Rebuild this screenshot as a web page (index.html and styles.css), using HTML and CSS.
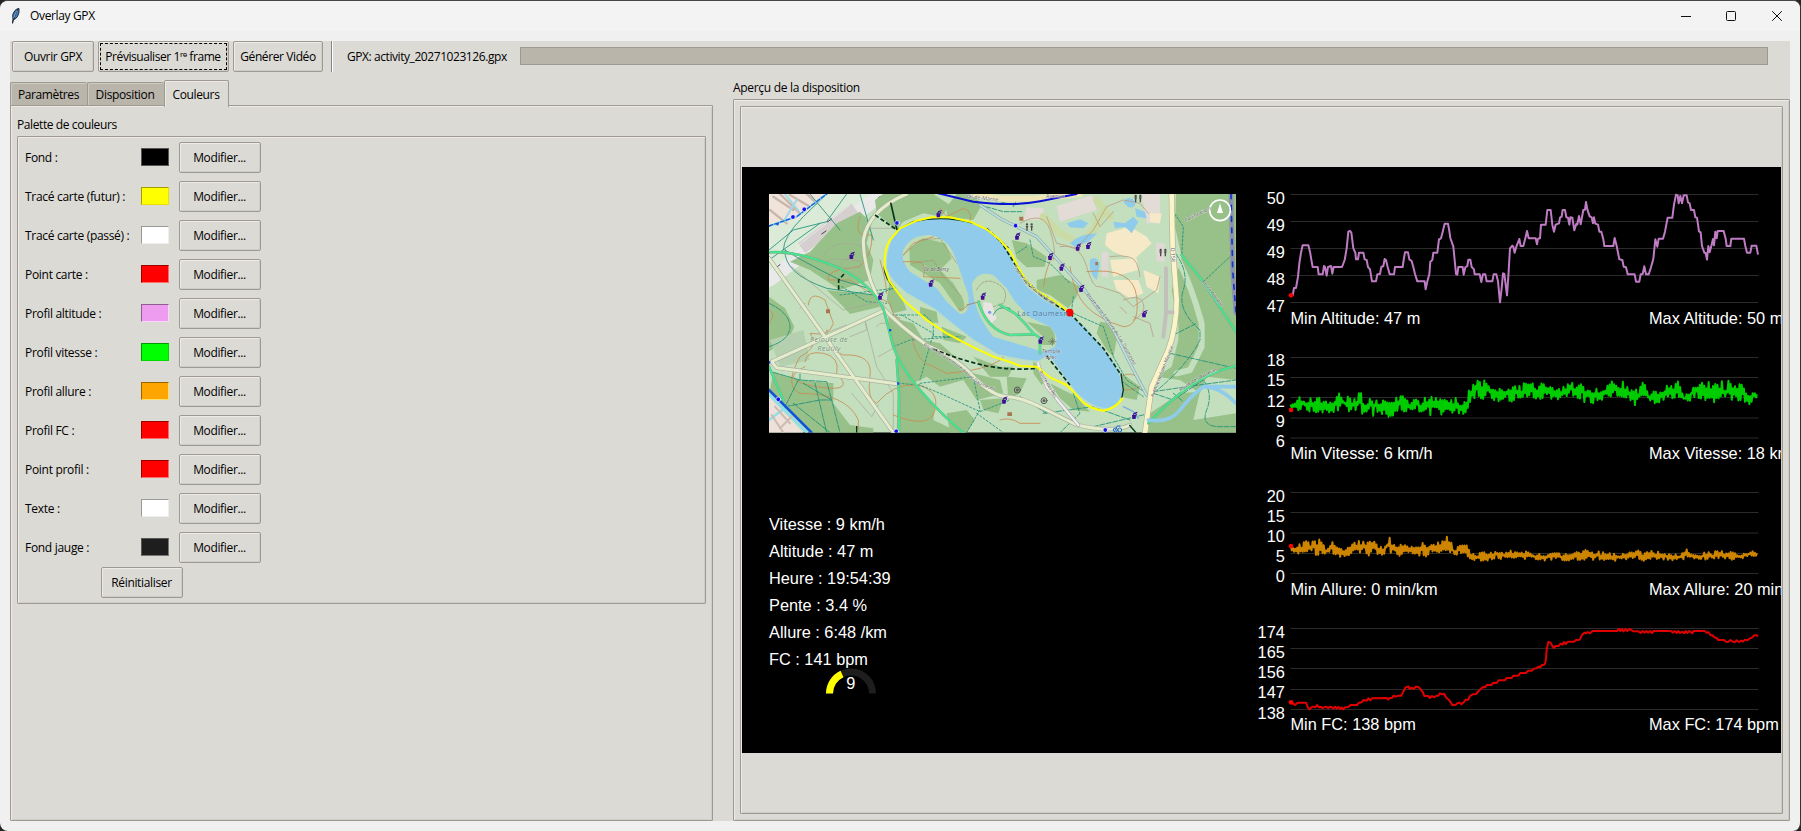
FILE: index.html
```html
<!DOCTYPE html>
<html lang="fr">
<head>
<meta charset="utf-8">
<title>Overlay GPX</title>
<link rel="stylesheet" href="styles.css">
</head>
<body>
<div class="window">
  <header class="titlebar">
    <svg class="feather" viewBox="0 0 12 18"><path d="M2.5 16.500L3 12Q1.500 7 5 3.500Q7 1.500 9 1.500Q9.500 6 7.500 9.500Q6 12 3.500 12.500" fill="#3d7cc4" stroke="#1c2632" stroke-width="1"/><path d="M7.500 3.500L4 11" stroke="#a9d3f5" stroke-width="1.200"/><path d="M8 2L2.500 16" stroke="#10151c" stroke-width=".7"/></svg>
    <span class="title">Overlay GPX</span>
    <svg class="controls" viewBox="0 0 102 12" fill="none" stroke="#111"><path d="M0 6.500H10"/><rect x="45.500" y="1.500" width="9" height="9" rx="1"/><path d="M91.200 1.200L100.800 10.800M100.800 1.200L91.200 10.800"/></svg>
  </header>
  <main class="app">
    <div class="toolbar">
      <button class="btn b-open">Ouvrir GPX</button>
      <button class="btn b-prev focus">Prévisualiser 1ʳᵉ frame</button>
      <button class="btn b-gen">Générer Vidéo</button>
      <i class="sep"></i>
      <span class="file">GPX: activity_20271023126.gpx</span>
      <div class="progress"></div>
    </div>
    <div class="panes">
      <section class="left">
        <nav class="tabs"><span class="tab t1">Paramètres</span><span class="tab t2">Disposition</span><span class="tab t3 active">Couleurs</span></nav>
        <div class="pane frame">
          <div class="caption">Palette de couleurs</div>
          <div class="palette frame">
            <div class="row"><span>Fond :</span><i class="sw black"></i><button class="btn">Modifier...</button></div>
            <div class="row"><span>Tracé carte (futur) :</span><i class="sw yellow"></i><button class="btn">Modifier...</button></div>
            <div class="row"><span>Tracé carte (passé) :</span><i class="sw white"></i><button class="btn">Modifier...</button></div>
            <div class="row"><span>Point carte :</span><i class="sw red"></i><button class="btn">Modifier...</button></div>
            <div class="row"><span>Profil altitude :</span><i class="sw violet"></i><button class="btn">Modifier...</button></div>
            <div class="row"><span>Profil vitesse :</span><i class="sw green"></i><button class="btn">Modifier...</button></div>
            <div class="row"><span>Profil allure :</span><i class="sw orange"></i><button class="btn">Modifier...</button></div>
            <div class="row"><span>Profil FC :</span><i class="sw red"></i><button class="btn">Modifier...</button></div>
            <div class="row"><span>Point profil :</span><i class="sw red"></i><button class="btn">Modifier...</button></div>
            <div class="row"><span>Texte :</span><i class="sw white"></i><button class="btn">Modifier...</button></div>
            <div class="row"><span>Fond jauge :</span><i class="sw dark"></i><button class="btn">Modifier...</button></div>
            <button class="btn reset">Réinitialiser</button>
          </div>
        </div>
      </section>
      <section class="right">
        <div class="caption2">Aperçu de la disposition</div>
        <div class="outer frame"><div class="inner frame">
<svg class="preview" viewBox="742 167 1039 586">
<defs>
  <clipPath id="mapclip"><rect x="27" y="42" width="1401" height="716"/></clipPath>
  <g id="tap"><path d="M-6-3H6L5 9H-5Z" fill="#3c0f96"/><path d="M-1-2V-7H7V-3M0-8L9-11" fill="none" stroke="#3c0f96" stroke-width="3"/></g>
  <g id="wc" fill="#4b4b4b"><circle cx="-7" cy="-8" r="3.500"/><circle cx="7" cy="-8" r="3.500"/><path d="M-11-4H-3L-5 3V11H-9V3ZM3-4H11L9 3V11H5V3Z"/></g>
</defs>
<rect x="742" y="167" width="1039" height="586" fill="#000"/>
<g transform="translate(760 180) scale(.33333)"><g clip-path="url(#mapclip)" fill="none" stroke-linecap="round" stroke-linejoin="round">
  <rect x="27" y="42" width="1401" height="716" fill="#c4dfbe"/>
  <!-- streets and buildings, north-west -->
  <path d="M27 42H340L330 70L100 255L27 305Z" fill="#dcebd8"/>
  <path d="M27 42H200L120 115L27 140Z" fill="#efe3da"/>
  <path d="M40 50L100 90M30 90L80 130M90 45L150 80M60 42L120 100M140 42L170 70" stroke="#c9b6ad" stroke-width="7"/>
  <path d="M75 42L115 92M110 60L70 125" stroke="#9fd9e6" stroke-width="6"/>
  <path d="M27 300L340 62L400 42" stroke="#e9e9e9" stroke-width="42"/>
  <path d="M125 205L285 85" stroke="#d5cfcf" stroke-width="38" stroke-linecap="butt"/>
  <path d="M110 200L270 75M125 230L295 100" stroke="#f4f4f4" stroke-width="2"/>
  <path d="M45 265L60 254M185 162L198 153M202 126L215 117M355 53L367 47" stroke="#444" stroke-width="3"/>
  <!-- woods -->
  <g fill="#98c189">
    <path d="M150 215L230 130L300 95L335 130L320 190L340 240L330 300L240 330L150 270L90 245Z"/>
    <path d="M370 42H520L570 75L545 110L490 100L430 125L410 150L350 100L345 60Z"/>
    <path d="M590 42H640L665 75L640 120L560 110L560 80Z"/>
    <path d="M200 330L345 345L360 380L270 402L240 370Z"/>
    <path d="M27 350L75 385L103 440L90 470L27 515Z"/>
    <path d="M40 577L120 600L220 610V670L270 735L340 745V758H150L30 630Z"/>
    <path d="M390 300L420 340L440 390L400 400L380 360Z"/>
    <path d="M480 380L530 395L535 430L510 425L480 405Z"/>
    <path d="M385 410L460 430L490 480L540 490L640 580L720 600L730 640L650 660L610 600L540 620L500 590L460 610L500 650L525 680L520 720L600 758H410L415 600L405 510L385 455Z"/>
    <path d="M545 440L620 470L600 490L550 480ZM640 530L720 560L760 560L745 590L690 590ZM560 700L620 690L645 720L620 758H570ZM660 660L730 655L715 700L670 690Z"/>
    <path d="M755 180L800 190L860 230L855 260L800 262L770 235ZM830 300L900 285L960 320L950 350L925 385L870 345L830 330Z"/>
    <path d="M1020 425L1050 430L1070 480L1060 530L1040 510L1010 460ZM1070 580L1100 590L1140 620L1130 660L1080 650ZM870 610L950 650L990 695L940 690L900 655ZM740 590L800 595L780 640L745 660ZM820 540L860 600L845 615L820 580Z"/>
    <path d="M1248 42H1428V600L1340 590L1320 640L1260 600L1190 590L1235 560L1255 480V430L1235 330L1265 230L1245 140Z"/>
    <path d="M1170 700L1260 640L1320 635L1300 720L1428 700V758H1165Z"/>
  </g>
  <path d="M1255 240Q1295 320 1325 430L1325 500L1290 570L1250 580" stroke="#c4dfbe" stroke-width="18"/>
  <path d="M30 480L130 450L150 540L60 560Z" fill="#b5d0ae"/>
  <!-- zoo grounds -->
  <path d="M800 82L850 85L855 120L790 120ZM890 78L995 45L1010 90L900 125ZM1145 42H1200V130H1160Z" fill="#e2dbd6"/>
  <path d="M850 110L900 160L960 190L1000 150L1030 90M1010 60L1050 110" stroke="#cbdba5" stroke-width="22"/>
  <path d="M1040 160L1110 140L1160 170L1175 190L1120 240L1060 215L1035 195ZM1050 240L1130 235L1135 270L1060 290ZM1060 300L1135 300L1150 340L1110 355L1070 330ZM1150 270L1200 290L1195 340L1160 320ZM1170 100L1205 100L1200 130L1170 125Z" fill="#f5e9c8"/>
  <path d="M1025 215H1045V290H1025ZM1187 190H1215V245H1190Z" fill="#e0d8d4"/>
  <g fill="#8fcbea"><path d="M920 130L960 118L985 130L970 145L930 142ZM930 190Q960 160 1012 160L985 185L945 200ZM1060 125L1095 130L1120 110L1135 125L1115 160L1095 140L1065 145ZM1090 65Q1105 45 1125 62Q1130 85 1105 82ZM1125 85L1155 95L1160 115L1130 110ZM990 240Q1005 225 1020 250L1010 300Q985 280 990 240Z"/></g>
  <path d="M780 130Q850 90 870 150T880 240M860 110L890 190L950 205L1000 150L1040 80L1090 60L1140 70L1165 100M900 200Q960 190 980 260T1020 320L1080 340L1120 380L1190 330L1200 290M1050 230Q1120 220 1130 250T1140 290M1090 360Q1140 340 1150 370T1120 420M1120 410L1170 430L1180 470M1080 380L1100 400M1000 100L1020 140L1060 95" stroke="#b99f82" stroke-width="2.500"/>
  <!-- contour lines -->
  <g stroke="#c98b53" stroke-width="2.500"><path d="M300 110Q285 150 305 165L335 165Q340 220 300 260L235 270Q200 280 205 300L270 300L340 345L390 370Q400 420 420 415"/><path d="M145 375Q150 330 195 360L220 430Q210 470 150 460Q180 500 120 530Q70 620 120 640Q260 640 295 720V750"/><path d="M135 545Q140 510 190 520T230 580Q290 640 170 620T135 560M200 450Q200 510 250 525Q340 520 330 590T350 670Q400 610 470 615Q540 630 525 690T400 705"/><path d="M455 470Q470 550 520 560L560 580Q680 570 720 540T755 480M360 240Q380 310 380 340"/><path d="M540 85L560 110L610 85Q650 100 620 140M850 320Q860 250 880 230M930 260Q940 340 980 380T1090 440Q1140 440 1130 350Q1120 260 980 275"/><path d="M720 310L770 370M720 380L790 450Q840 460 870 490M720 720Q750 710 780 730H840M1080 590Q1120 570 1140 600T1080 630M27 390Q50 400 27 430"/></g>
  <!-- footpaths -->
  <g stroke="#1b8f78" stroke-width="2.500"><path d="M27 210L100 150L200 125L260 42M70 210Q70 170 130 110L200 42M75 210Q120 240 240 300L325 325M27 240L180 130M150 42L240 150M75 210Q70 280 200 325L340 345M300 42L340 180M385 70L330 115"/><path d="M27 370Q90 400 90 440T27 500M40 577L120 600L200 605L215 660L130 610M120 600V580M115 600L75 680L180 660L215 660L240 758M165 610L200 758M100 670L210 758" stroke-dasharray="18 4"/><path d="M245 320L320 365L380 370M240 345L400 325L345 345M395 405H495L520 430V470H580M400 500L450 480L600 470M425 405L520 460L480 600M415 610L480 615L540 640L660 695L750 660M480 610L640 590L660 690L620 758M650 700L730 758" stroke-dasharray="6 6"/><path d="M940 400L1030 440L1060 530L1100 600L1160 640M810 180L820 230L870 250L930 310M940 350L935 390M800 200L770 220M1245 110L1240 95L1270 140L1265 230M1330 305L1410 230" stroke-dasharray="7 5"/><path d="M1235 205Q1290 270 1270 330T1320 450V480Q1280 560 1180 640M1230 520L1428 565M1240 465L1310 430M1180 635L1280 620L1428 600M1180 640L1240 660L1330 600Q1360 640 1340 690T1380 740H1428M1240 640L1270 665M1000 740L1170 700M850 700L1000 680L1110 720M940 640L960 700L900 758M780 650L860 700M1080 600L1150 650" stroke-dasharray="15 5"/><path d="M720 65L760 75L830 60M770 60L760 80M660 75L730 95H790" stroke-dasharray="14 5"/></g>
  <!-- pale tracks -->
  <g stroke="#a9a59a" stroke-width="2"><path d="M120 385L135 370M195 460L260 435M95 260L250 390L360 365M270 470L320 450L315 420L350 560L400 640V758M355 530L400 505M275 640L335 710L355 675M350 440L360 430H385M325 145H400M190 230Q210 190 260 190T320 220T270 240T190 250M245 250Q260 225 290 240T280 262T245 250M400 400L470 470L455 500"/></g>
  <!-- roads -->
  <g stroke="#aaada5" stroke-width="13"><path d="M27 235L400 758M35 545L365 395M35 545L50 563L415 612M440 42Q325 90 310 180Q310 280 370 385Q420 440 500 495Q600 540 640 590Q700 650 740 650T860 690T950 735Q1060 760 1110 735"/></g>
  <g stroke="#e4edc9" stroke-width="9"><path d="M27 235L400 758M35 545L365 395M35 545L50 563L415 612M440 42Q325 90 310 180Q310 280 370 385Q420 440 500 495Q600 540 640 590Q700 650 740 650T860 690T950 735Q1060 760 1110 735"/></g>
  <path d="M1235 42L1238 200L1250 360Q1250 440 1225 510L1175 620L1155 758" stroke="#b6b19a" stroke-width="18"/><path d="M1235 42L1238 200L1250 360Q1250 440 1225 510L1175 620L1155 758" stroke="#f9f5c8" stroke-width="14"/>
  <path d="M1218 265V400L1210 470M1218 397H1238" stroke="#c3bfbb" stroke-width="12"/>
  <path d="M835 520V555L860 620L955 735" stroke="#aaa" stroke-width="11"/><path d="M835 520V555L860 620L955 735" stroke="#eee" stroke-width="7"/>
  <!-- lake and islands -->
  <path d="M379 265Q374 160 450 127Q560 95 680 145Q735 185 765 260L800 318L850 357L925 400L975 440L1050 530Q1090 580 1088 640Q1080 675 1045 686Q1000 690 950 640L905 580L865 525L835 545L790 540L715 525L640 480L575 430L520 385L440 340Q390 300 379 265Z" fill="#90cbeb" stroke="#b9dcc8" stroke-width="4"/>
  <path d="M430 210Q450 165 510 165Q565 175 585 230L625 345Q630 405 600 402L560 365L530 325L450 275Q420 240 430 210Z" fill="#bfdcb5"/>
  <path d="M448 205L490 175L555 190L575 235L540 270L580 310L610 360Q620 390 600 395L540 310L450 255Z" fill="#98c189"/>
  <path d="M636 310Q655 270 700 285L740 325L765 365L810 412L870 440Q900 470 885 500L850 515L800 500L700 470Q640 400 636 310Z" fill="#c0ddb8"/>
  <path d="M800 425L870 440Q895 470 880 495L845 495L850 470Z" fill="#98c189"/>
  <path d="M430 225L460 190L520 170M430 245H480Q500 260 490 290L600 295M595 385Q600 400 625 375" stroke="#c98b53" stroke-width="2.500"/>
  <path d="M620 375L660 365" stroke="#a38f6f" stroke-width="3"/>
  <path d="M670 365L695 370L710 415L695 430L670 395Z" fill="#e8e4e2"/><path d="M430 225L480 180L540 175L590 250M460 250L520 240L550 290L605 350M650 330Q670 290 710 310T730 370L700 380" stroke="#a38f6f" stroke-width="2" stroke-dasharray="8 4"/>
  <path d="M655 365Q680 450 750 465L825 463L840 475V520M720 375L765 400L790 425L820 460" stroke="#7fa08a" stroke-width="8"/><path d="M700 405Q710 375 750 385" stroke="#1b8f78" stroke-width="2.500"/><path d="M655 365Q680 450 750 465L825 463L840 475V520M720 375L765 400L790 425L820 460" stroke="#4de892" stroke-width="6"/>
  <!-- cycle routes -->
  <g stroke="#8a9b8c" stroke-width="8"><path d="M27 217Q110 210 240 265Q330 310 370 385L400 500Q420 560 480 630T610 758M410 540L417 640V750M27 560L70 660"/><path d="M1265 225L1330 305L1428 455M1165 730Q1220 670 1280 625T1428 557"/></g>
  <g stroke="#45e58d" stroke-width="6"><path d="M27 217Q110 210 240 265Q330 310 370 385L400 500Q420 560 480 630T610 758M410 540L417 640V750M27 560L70 660"/><path d="M1265 225L1330 305L1428 455M1165 730Q1220 670 1280 625T1428 557"/></g>
  <path d="M660 75L720 115L830 170L970 325L1060 450L1120 570L1160 645" stroke="#8a9a94" stroke-width="9"/><path d="M660 75L720 115L830 170L970 325L1060 450L1120 570L1160 645" stroke="#b7dfe0" stroke-width="6"/>
  <path d="M1165 720Q1230 730 1260 690T1330 620Q1380 620 1428 670M1330 620H1428" stroke="#8fcbea" stroke-width="11"/>
  <!-- boulevards -->
  <path d="M640 42L720 56H820L960 42" stroke="#eee5b7" stroke-width="18"/><path d="M535 40L640 65Q760 80 840 64L950 42" stroke="#0b12d5" stroke-width="6"/>
  <path d="M27 650L130 758H27Z" fill="#eee1d9"/><path d="M27 643L140 758M27 720L80 680" stroke="#8be0ec" stroke-width="7"/><path d="M27 630L155 758" stroke="#0f55dc" stroke-width="8"/><path d="M45 680L90 730M60 745L95 710M35 705L70 758" stroke="#cdbab1" stroke-width="6"/>
  <path d="M27 138L110 110L200 42" stroke="#8be0ec" stroke-width="7"/><path d="M27 138L110 110L200 42" stroke="#195bd7" stroke-width="4" stroke-dasharray="12 6"/>
  <path d="M1413 42L1418 270L1428 400" stroke="#8d93ab" stroke-width="14"/><path d="M1413 42L1418 270L1428 400" stroke="#1533c8" stroke-width="5" stroke-dasharray="14 20"/>
  <path d="M1090 680L1120 695L1135 715" stroke="#7aaedf" stroke-width="4"/>
  <!-- dark trails -->
  <g stroke="#06331d" stroke-linecap="butt"><path d="M392 68L411 150" stroke-width="5"/><path d="M345 105L408 148M252 282L236 300V330M520 507Q600 540 680 558Q760 572 830 565M930 400L1030 505L1080 580M860 528L930 615M720 180L800 310L850 352L925 398M680 145L745 205" stroke-width="5" stroke-dasharray="13 7"/><path d="M411 150L460 125Q550 105 640 130M372 260Q375 300 405 325M1083 580L1090 630L1085 655M1108 735L1128 758M290 738V758" stroke-width="4"/></g>
  <!-- recorded track -->
  <path d="M929 398L893 370L860 350L825 328L800 304L775 263L752 217L720 180L712 173L680 148L630 125L570 112H515L470 122L420 145L390 180Q372 210 374 262L388 303L430 360L500 420L560 460L640 502L700 530L750 546L780 558L830 560L870 592L920 615L940 635L970 668Q1000 690 1032 692Q1068 684 1087 655" stroke="#ffff00" stroke-width="6"/>
  <!-- markers -->
  <g><use href="#tap" x="274" y="228"/><use href="#tap" x="512" y="311"/><use href="#tap" x="360" y="350"/><use href="#tap" x="668" y="350"/><use href="#tap" x="535" y="103"/><use href="#tap" x="732" y="662"/><use href="#tap" x="771" y="170"/><use href="#tap" x="870" y="231"/><use href="#tap" x="904" y="263"/><use href="#tap" x="953" y="203"/><use href="#tap" x="984" y="198"/><use href="#tap" x="963" y="327"/><use href="#tap" x="1152" y="403"/><use href="#tap" x="841" y="482"/><use href="#tap" x="1122" y="708"/></g>
  <use href="#wc" x="1134" y="56"/><use href="#wc" x="808" y="141"/><use href="#wc" x="1209" y="218"/>
  <g fill="#1212e8" stroke="#fff" stroke-width="2"><circle cx="99" cy="111" r="7"/><circle cx="133" cy="88" r="7"/><circle cx="411" cy="129" r="7"/><circle cx="55" cy="658" r="7"/><circle cx="409" cy="754" r="7"/><circle cx="767" cy="137" r="7"/><circle cx="1036" cy="750" r="7"/></g>
  <g fill="#1d4ddc"><path d="M387 447H394V454H387ZM411 607H418V614H411ZM49 129H56V136H49ZM27 543H31V551H27Z"/></g><circle cx="689" cy="397" r="5" fill="#7e9de4"/>
  <g stroke="#555" stroke-width="3"><circle cx="772" cy="630" r="9"/><circle cx="852" cy="662" r="9"/></g><g fill="#666"><circle cx="772" cy="630" r="5"/><circle cx="852" cy="662" r="5"/></g>
  <path d="M866 485H888M877 474V496M870 478L884 492M884 478L870 492" stroke="#666" stroke-width="2"/>
  <path d="M1060 750a6 6 0 1 0 12 0a6 6 0 1 0-12 0M1073 750a6 6 0 1 0 12 0a6 6 0 1 0-12 0M1066 750L1072 738H1080" stroke="#1b68d2" stroke-width="3"/>
  <path d="M198 388H210V400H198ZM742 697H756V708H742ZM1006 246H1014V256H1006ZM778 110H790V122H778Z" fill="#a87750"/>
  <circle cx="929" cy="398" r="11.500" fill="#f00"/>
  <circle cx="1380" cy="91" r="31" stroke="#fff" stroke-width="5"/><path d="M1380 70L1389 99H1371Z" fill="#fff"/>
  <!-- place names -->
  <defs><path id="r1" d="M490 497Q580 545 620 585T735 640"/><path id="r2" d="M978 345Q1070 450 1130 575"/><path id="r3" d="M760 258Q800 330 895 382"/><path id="r4" d="M1180 652L1252 470"/><path id="r5" d="M1325 305L1390 390"/><path id="r6" d="M1262 635Q1320 590 1385 568"/><path id="r7" d="M836 575L890 665"/><path id="r8" d="M1278 125L1370 80"/></defs>
  <g class="mapnames"><text x="150" y="486" class="park">Pelouse de</text><text x="172" y="514" class="park">Reuilly</text><text x="491" y="273" class="isle">Île de Bercy</text><text x="772" y="407" class="water">Lac Daumesn</text><text x="846" y="519" class="small">Temple</text><text x="856" y="537" class="small">Grec</text><text transform="translate(1232 203) rotate(87)" class="small">D 158</text><text x="615" y="53" class="small" transform="rotate(7 615 53)">Val-de-Marne</text><text x="858" y="53" class="small">Avenue</text>
  <text class="road"><textPath href="#r1">Route de la Ceinture du Lac Daumesnil</textPath></text><text class="road"><textPath href="#r2">Route de la Ceinture du Lac Daumesnil</textPath></text><text class="road"><textPath href="#r3">Promenade Maurice Boitel</textPath></text><text class="road"><textPath href="#r4">Avenue de Saint-Maurice</textPath></text><text class="road"><textPath href="#r5">Route Aimable</textPath></text><text class="road"><textPath href="#r6">Route des Batteries</textPath></text><text class="road"><textPath href="#r7">Route des Îles</textPath></text><text class="road"><textPath href="#r8">Fortifications</textPath></text></g>
</g></g>

<!-- gauge -->
<path d="M829.500 693.500A21.500 21.500 0 0 1 872.500 693.500" fill="none" stroke="#1e1e1e" stroke-width="7"/>
<path d="M829.500 693.500A21.500 21.500 0 0 1 842 674" fill="none" stroke="#ff0" stroke-width="7"/>
<g class="osd"><text x="769" y="529.600">Vitesse : 9 km/h</text><text x="769" y="556.700">Altitude : 47 m</text><text x="769" y="583.700">Heure : 19:54:39</text><text x="769" y="610.700">Pente : 3.4 %</text><text x="769" y="637.700">Allure : 6:48 /km</text><text x="769" y="664.700">FC : 141 bpm</text><text x="846.300" y="688.700">9</text></g>

<path class="grid" d="M1290.500 194.500H1758.500M1290.500 221.500H1758.500M1290.500 248.500H1758.500M1290.500 275.500H1758.500M1290.500 302.500H1758.500M1290.500 357.500H1758.500M1290.500 377.500H1758.500M1290.500 397.500H1758.500M1290.500 418H1758.500M1290.500 438H1758.500M1290.500 492.500H1758.500M1290.500 512.500H1758.500M1290.500 533H1758.500M1290.500 553.500H1758.500M1290.500 573.500H1758.500M1290.500 628.500H1758.500M1290.500 648.500H1758.500M1290.500 668.500H1758.500M1290.500 689.500H1758.500M1290.500 709.500H1758.500"/>
<g class="osd scale"><text x="1284.800" y="203.500">50</text><text x="1284.800" y="230.500">49</text><text x="1284.800" y="257.500">49</text><text x="1284.800" y="284.500">48</text><text x="1284.800" y="311.500">47</text><text x="1284.800" y="366.300">18</text><text x="1284.800" y="386.400">15</text><text x="1284.800" y="406.500">12</text><text x="1284.800" y="426.800">9</text><text x="1284.800" y="446.700">6</text><text x="1284.800" y="501.700">20</text><text x="1284.800" y="522">15</text><text x="1284.800" y="542">10</text><text x="1284.800" y="562.300">5</text><text x="1284.800" y="582.400">0</text><text x="1284.800" y="637.500">174</text><text x="1284.800" y="657.700">165</text><text x="1284.800" y="677.900">156</text><text x="1284.800" y="698.200">147</text><text x="1284.800" y="718.500">138</text></g>
<g class="osd"><text x="1290.500" y="323.600">Min Altitude: 47 m</text><text x="1649" y="323.600">Max Altitude: 50 m</text><text x="1290.500" y="459">Min Vitesse: 6 km/h</text><text x="1649" y="459">Max Vitesse: 18 km/h</text><text x="1290.500" y="594.700">Min Allure: 0 min/km</text><text x="1649" y="594.700">Max Allure: 20 min/km</text><text x="1290.500" y="730">Min FC: 138 bpm</text><text x="1649" y="730">Max FC: 174 bpm</text></g>
<g transform="translate(1240 180) scale(.33333)" fill="none" stroke-linejoin="round" stroke-width="6">
  <path stroke="#bf7cc4" d="M152 346H158L162 324H168L174 290L178 250L183 218L188 196H205L210 215L215 245L218 261H233L236 283H248L252 258L255 261L260 287L264 261L273 258L277 281L281 261H306L314 240L320 205L325 155L330 153L334 158L340 205L346 218L348 238H354L357 218H370L374 238L380 240L384 261L390 268L396 304H408L412 283L420 282L424 261L430 258L434 237L438 240L443 261L449 283H462L465 261H488L491 240L495 217H504L508 238L515 243L520 261L525 282L532 304H554L557 328L562 304L568 283L571 245L577 240L580 218H592L597 178L603 175L608 156L614 131H624L628 153L631 174L640 200L644 240L648 282L652 284L655 261H668L671 284L676 262L682 258L685 239H691L695 261L702 268L704 283H719L724 306L729 283H736L740 304H757L761 283H769L774 304L780 367L785 325L789 280L793 282L801 346L805 290L810 205L817 197L820 200L824 218L829 200L838 177L842 198H850L856 175L861 153L866 175H887L891 193L894 176L900 175L903 134H917L922 90H932L937 134L942 155L947 134L957 130L960 113L965 110L968 90H975L979 112L984 113L988 134L991 112L997 113L1003 151L1009 131L1012 133L1017 108L1022 133L1030 90L1035 89L1038 66L1042 88L1049 109L1055 112L1059 130L1062 112L1066 131L1074 134L1078 155L1084 155L1090 178L1093 198H1120L1124 174L1130 198L1138 238L1147 240L1151 260L1158 262L1163 283H1184L1188 305H1198L1202 283L1208 282L1213 259L1218 283H1226L1233 262L1240 237L1246 178L1252 200L1256 176H1269L1275 155L1283 113H1297L1302 74L1308 44L1313 46L1316 70L1321 48L1326 70L1331 46L1340 46L1344 67L1349 70L1353 90H1362L1366 112L1371 113L1377 154L1382 157L1386 198L1393 218L1397 219L1401 239L1405 198L1409 217L1414 198L1419 177L1422 196L1426 155L1430 175L1433 153H1451L1457 176L1460 198H1471L1474 176H1512L1516 198L1521 218H1531L1535 197H1549L1554 224"/>
  <path id="speed" stroke="#00cd00"/>
  <path id="pace" stroke="#cd8500" transform="translate(0 780)"/>
  <path stroke="#e10000" transform="translate(0 780)" d="M152 788L158 790L165 795L173 788H198L204 803L209 808L214 802L220 800L226 802L231 795L237 802L244 801L248 805L254 801L259 800L265 805L269 800L275 801L280 806L285 800L290 806L295 801L301 807L305 802L310 808L315 802L325 801L332 795H351L357 788L365 787L370 780L380 782L385 775L391 781L396 775L440 774L445 779L449 774H456L461 767L467 770L475 767H484L490 755L497 742L505 739L509 747L515 743L521 747L527 740H534L539 745L548 756L553 768H565L570 774L576 768L583 772L589 767H595L600 760L607 763L612 761L619 773L628 781L638 796L647 794L652 790L659 788L664 793L672 786L677 779L684 779L690 768L698 763L708 762L716 753L729 741L735 742L740 735H754L760 728L770 729L776 721H794L800 714H815L820 707H835L841 699H858L864 692L875 692L882 686L889 685L895 680L901 681L906 675L913 674L917 664L920 630L925 606L932 608L937 618L942 624L947 618L956 618L961 611L967 614L972 606L977 612L984 605H1002L1008 600L1019 599L1026 585L1033 578L1038 580L1043 576L1050 580L1058 573H1131L1136 567L1141 573L1146 567L1151 574L1157 567L1162 573L1168 567L1174 570L1180 574H1195L1202 579L1208 573L1213 578L1219 573L1224 578L1230 573L1236 579L1241 573L1293 573L1298 578L1304 573L1310 579L1315 573L1320 579L1327 575L1332 580L1337 573L1342 579L1348 573L1357 580L1361 573H1394L1400 578L1406 577L1411 585L1417 586L1423 592L1430 594L1435 600H1452L1458 605L1464 606L1471 600L1477 604L1484 607L1490 601L1497 606L1504 602L1509 605L1515 599L1522 601L1528 596L1536 593L1543 586H1550L1554 589"/>
  <g fill="#f00"><circle cx="153" cy="346" r="7"/><circle cx="153" cy="690" r="7"/><circle cx="153" cy="1098" r="7"/><circle cx="153" cy="1567" r="7"/></g>
</g>
</svg>
        </div></div>
      </section>
    </div>
  </main>
</div>
<script src="script.js"></script>
</body>
</html>
```
FILE: styles.css
```css
* { box-sizing: border-box; }
body { margin: 0; background: #252525; font: 12px/16px "Open Sans", "Noto Sans", sans-serif; letter-spacing: -.35px; color: #000; overflow: hidden; }
.window { width: 1801px; height: 831px; background: #f0f0f0; border-top: 1px solid #464446; border-right: 1px solid #333; border-radius: 8px; overflow: hidden; }
.titlebar { height: 30px; background: #f3f3f3; display: flex; align-items: center; padding: 0 16px 0 10px; }
.feather { width: 12px; height: 18px; fill: none; }
.title { margin-left: 8px; }
.controls { width: 102px; height: 12px; margin-left: auto; margin-right: 1px; }
.app { margin: 10px 10px 0; width: 1780px; height: 780px; background: #dcdad5; display: flex; flex-direction: column; }
.toolbar { height: 31px; display: flex; padding-left: 2px; }
.btn { font: inherit; letter-spacing: inherit; color: #000; width: 82px; height: 31px; padding: 0 1px 0 0; white-space: nowrap; background: #dcdad5; border: 1px solid #9e9a91; border-radius: 2px; box-shadow: inset 1px 1px #eeebe7, inset -1px -1px #cfcdc8; }
.b-prev { width: 131px; margin: 0 4px; position: relative; letter-spacing: -.43px; }
.focus::after { content: ""; position: absolute; inset: 1px; border: 1px dashed #000; }
.b-gen { width: 90px; padding: 0; letter-spacing: -.4px; }
.b-open { padding: 0; }
.sep { width: 2px; margin-left: 8px; background: linear-gradient(90deg, #858585 50%, #fff 50%); }
.file { width: 173px; margin-left: 14px; line-height: 31px; white-space: nowrap; letter-spacing: -.43px; }
.progress { width: 1248px; height: 18px; margin-top: 6px; background: #bab5ab; border: 1px solid #9e9a91; }
.panes { flex: 1; display: flex; }
.frame { border: 1px solid #9e9a91; border-radius: 1px; box-shadow: inset 1px 1px #eeebe7, inset -1px -1px #cfcdc8; }
.left { width: 703px; display: flex; flex-direction: column; padding-top: 8px; }
.tabs { height: 26px; display: flex; align-items: flex-end; z-index: 1; }
.tab { height: 24px; padding: 4px 1px 0 0; text-align: center; background: #bab5ab; border: 1px solid #9e9a91; border-right: 0; border-radius: 2px 2px 0 0; box-shadow: inset 1px 1px #cfcac0; }
.t1 { width: 77px; letter-spacing: -.38px; } .t2 { width: 77px; padding-right: 2px; } .t3 { width: 65px; }
.tab.active { height: 27px; padding-top: 6px; margin-bottom: -1px; background: #dcdad5; border: 1px solid #9e9a91; border-bottom: 0; box-shadow: inset 1px 1px #eeebe7; }
.pane { flex: 1; margin-top: -1px; padding: 10px 5px 0 6px; }
.caption { height: 20px; line-height: 17px; letter-spacing: -.4px; }
.palette { width: 689px; height: 468px; padding: 5px 7px; }
.row { height: 31px; margin-bottom: 8px; display: flex; align-items: center; }
.row span { width: 116px; letter-spacing: -.3px; }
.row:nth-last-child(2) { margin-bottom: 4px; }
.sw { width: 28px; height: 18px; margin-right: 10px; margin-bottom: 1px; border: 1px solid; }
.black { background: #000; border-color: #555; }
.yellow { background: #ff0; border-color: #a59e00 #e8e000 #e8e000 #a59e00; }
.white { background: #fff; border-color: #999 #eee #eee #999; }
.red { background: #f00; border-color: #990000 #ff6c6c #ff6c6c #990000; }
.violet { background: #ee9cf0; border-color: #8f5e90 #fbd6fc #fbd6fc #8f5e90; }
.green { background: #0f0; border-color: #090 #00d800 #00d800 #090; }
.orange { background: #ffa500; border-color: #996300 #ffe066 #ffe066 #996300; }
.dark { background: #1e1e1e; border-color: #555 #777 #777 #555; }
.reset { display: block; margin-left: 76px; }
.right { width: 1057px; margin-left: 20px; padding-top: 8px; display: flex; flex-direction: column; }
.caption2 { height: 19px; line-height: 16px; letter-spacing: -.3px; }
.outer { flex: 1; padding: 6px; }
.inner { height: 708px; padding: 60px 1px 0; }
.preview { display: block; width: 1039px; height: 586px; }
.osd { font: 16.33px "Liberation Sans", Arial, sans-serif; letter-spacing: 0; fill: #fff; }
.scale { text-anchor: end; }
.grid { stroke: #2b2b2b; stroke-width: 1; fill: none; }
.mapnames { letter-spacing: 0; fill: #505050; stroke: #ffffff; stroke-opacity: .6; stroke-width: 2px; paint-order: stroke; font-family: "Noto Sans", sans-serif; }
.park { font-size: 22px; font-style: italic; fill: #718f70; letter-spacing: 1px; }
.isle { font-size: 15px; font-style: italic; }
.water { font-size: 22px; fill: #527da8; stroke-opacity: .2; letter-spacing: 1.3px; }
.small { font-size: 16px; fill: #667; }
.road { font-size: 14px; }
```
FILE: script.js
```js
// Draws a dense signal that alternates between the two sides of an envelope.
// Each envelope entry is [x, top, bottom].
function drawSignal(id, envelope, seed) {
  let s = seed;
  const rnd = () => (s = (s * 16807) % 2147483647) / 2147483647;
  const pts = [];
  let k = 0, up = true;
  for (let x = envelope[0][0]; x <= 1554; x += 3.3) {
    while (k < envelope.length - 2 && envelope[k + 1][0] < x) k++;
    const a = envelope[k], b = envelope[k + 1];
    const t = Math.min(1, (x - a[0]) / (b[0] - a[0]));
    const top = a[1] + (b[1] - a[1]) * t - 2, bot = a[2] + (b[2] - a[2]) * t + 2;
    const r = rnd() * 0.5;
    pts.push(x.toFixed(1) + ' ' + (top + (bot - top) * (up ? r : 1 - r)).toFixed(1));
    up = !up;
  }
  document.getElementById(id).setAttribute('d', 'M' + pts.join('L'));
}

drawSignal('speed', [[152,675,690],[170,650,690],[200,650,698],[240,648,705],[270,662,702],[300,630,688],[312,658,682],[335,640,700],[345,655,695],[358,630,700],[372,655,705],[400,645,705],[440,657,712],[480,642,698],[510,668,690],[525,640,690],[545,655,705],[570,645,712],[600,652,700],[620,665,710],[645,655,698],[680,655,702],[690,620,680],[705,605,650],[735,598,660],[760,608,655],[772,630,676],[800,610,665],[840,612,665],[870,610,655],[920,610,660],[960,625,658],[990,605,645],[1020,608,655],[1048,615,676],[1080,628,660],[1115,602,648],[1150,605,650],[1190,630,677],[1211,597,650],[1225,630,677],[1260,622,666],[1315,605,650],[1335,635,678],[1360,625,650],[1385,602,655],[1430,608,668],[1490,600,660],[1530,640,672],[1545,630,660],[1554,645,660]], 4711);
drawSignal('pace', [[152,318,325],[165,318,342],[200,298,342],[240,298,347],[255,322,345],[275,305,340],[300,320,352],[340,312,345],[360,300,352],[385,293,345],[410,308,345],[432,315,345],[440,283,345],[460,305,345],[480,312,348],[510,317,335],[530,305,345],[560,315,348],[575,290,345],[600,310,342],[620,290,345],[645,325,345],[660,308,342],[680,306,348],[695,342,358],[735,338,362],[760,340,358],[770,330,355],[800,338,358],[810,330,358],[840,340,358],[860,335,358],[900,343,362],[950,338,358],[970,345,360],[1010,336,358],[1048,330,360],[1080,334,358],[1110,342,362],[1160,340,358],[1190,327,350],[1210,345,362],[1225,328,358],[1260,337,358],[1320,345,360],[1338,326,354],[1350,345,352],[1370,345,354],[1400,337,360],[1450,332,358],[1500,340,358],[1530,333,348],[1554,342,348]], 99);
```
